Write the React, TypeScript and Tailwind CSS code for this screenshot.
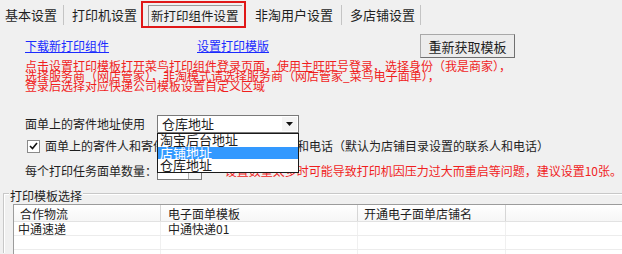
const font = { fontFamily: '"Noto Sans CJK SC", "Noto Sans", sans-serif' }

function Tabs() {
  return (
    <div className="flex h-[30px] items-center whitespace-nowrap text-[13px] text-[#1e1e1e]">
      <span className="ml-[5px]">基本设置</span>
      <div className="ml-[6px] h-[20px] w-px bg-[#c4c4c4]" />
      <span className="ml-[8px]">打印机设置</span>
      <div className="ml-[4px] mt-[1px] flex h-[27px] w-[105px] items-end self-start border-2 border-[#e01818] pl-[5px]">
        <div className="flex h-[21px] w-[94px] items-center border-l border-t border-[#9a9a9a] pl-[2px] text-[12.5px]">
          新打印组件设置
        </div>
      </div>
      <span className="ml-[9px]">非淘用户设置</span>
      <div className="ml-[8px] h-[20px] w-px bg-[#c4c4c4]" />
      <span className="ml-[8px]">多店铺设置</span>
      <div className="ml-[5px] h-[20px] w-px bg-[#c4c4c4]" />
    </div>
  )
}

function Arrow() {
  return (
    <svg width="7" height="4" viewBox="0 0 7 4">
      <path d="M0 0h7L3.5 4z" fill="#111" />
    </svg>
  )
}

export default function App() {
  return (
    <div
      className="relative h-[254px] w-[622px] overflow-hidden bg-[#f0f0f0] text-[12px] text-[#1e1e1e]"
      style={font}
    >
      <Tabs />

      <div className="pl-[25px]">
        {/* links + button */}
        <div className="mt-[4px] flex h-[24px] items-center">
          <span className="w-[172px] text-[#1a2bff] underline">下载新打印组件</span>
          <span className="w-[223px] text-[#1a2bff] underline">设置打印模版</span>
          <button className="h-[24px] w-[95px] border border-[#a8a8a8] border-b-[#707070] border-r-[#707070] bg-[#ececec] text-[13px] leading-none">
            重新获取模板
          </button>
        </div>

        {/* notice */}
        <div className="mt-[3px] text-[12px] leading-[10px] text-[#f01e1e]">
          <div>点击设置打印模板打开菜鸟打印组件登录页面，使用主旺旺号登录，选择身份（我是商家），</div>
          <div>选择服务商（网店管家），非淘模式请选择服务商（网店管家_菜鸟电子面单），</div>
          <div>登录后选择对应快递公司模板设置自定义区域</div>
        </div>

        {/* address source */}
        <div className="mt-[24px] flex h-[18px] items-center">
          <span className="w-[132px]">面单上的寄件地址使用</span>
          <div className="flex h-[18px] w-[142px] items-center justify-between border border-[#7a7a7a] bg-white pl-[4px] pr-[1px] text-[13px]">
            <span>仓库地址</span>
            <div className="flex h-[14px] w-[15px] items-center justify-center bg-[#f4f4f4]">
              <Arrow />
            </div>
          </div>
        </div>

        {/* checkbox */}
        <div className="mt-[6px] flex h-[14px] items-center whitespace-nowrap">
          <div className="ml-[2px] flex h-[13px] w-[13px] items-center justify-center border border-[#8a8a8a] bg-white">
            <svg width="9" height="8" viewBox="0 0 9 8">
              <path d="M1 4l2.5 2.5L8 1" stroke="#111" strokeWidth="1.6" fill="none" />
            </svg>
          </div>
          <span className="ml-[5px]">
            面单上的寄件人和寄件人电话使用店铺的联系人和电话（默认为店铺目录设置的联系人和电话）
          </span>
        </div>

        {/* count */}
        <div className="mt-[9px] flex h-[18px] items-center whitespace-nowrap">
          <span className="w-[135px]">每个打印任务面单数量：</span>
          <div className="flex h-[18px] w-[54px] items-center justify-end border border-[#7a7a7a] bg-white">
            <div className="flex h-full w-[13px] items-center justify-center border-l border-[#b0b0b0] bg-[#f4f4f4]">
              <Arrow />
            </div>
          </div>
          <span className="ml-[23px] text-[#f01e1e]">
            设置数量太多时可能导致打印机因压力过大而重启等问题，建议设置10张。
          </span>
        </div>
      </div>

      {/* group box */}
      <div className="relative ml-[3px] mt-[7px]">
        <div className="absolute left-0 right-0 top-[6px] h-[60px] border-l border-t border-[#c8c8c8] shadow-[inset_1px_1px_0_#ffffff]" />
        <span className="relative ml-[6px] bg-[#f0f0f0] px-[1px] leading-[13px]">打印模板选择</span>
        <div className="relative ml-[10px] mt-[-1px] border-l border-t border-[#9c9c9c] bg-white">
          <div className="flex h-[17px] border-b border-[#e2e2e2] bg-gradient-to-b from-white to-[#f6f6f6] text-[12px] leading-[17px]">
            <div className="w-[147px] border-r border-[#d6d6d6] pl-[6px]">合作物流</div>
            <div className="w-[197px] border-r border-[#d6d6d6] pl-[7px]">电子面单模板</div>
            <div className="w-[148px] border-r border-[#d6d6d6] pl-[6px]">开通电子面单店铺名</div>
            <div className="flex-1" />
          </div>
          {[['中通速递', '中通快递01'], ['', ''], ['', '']].map((r, i) => (
            <div key={i} className="flex h-[14px] border-b border-[#ececec] text-[12px] leading-[14px]">
              <div className="w-[147px] border-r border-[#f0f0f0] pl-[4px]">{r[0]}</div>
              <div className="w-[197px] border-r border-[#f0f0f0] pl-[7px]">{r[1]}</div>
              <div className="w-[148px] border-r border-[#f0f0f0]" />
              <div className="flex-1" />
            </div>
          ))}
        </div>
      </div>

      {/* open dropdown list */}
      <div className="absolute left-[157px] top-[133px] w-[142px] border border-[#1a1a1a] bg-white text-[13px] leading-[12.5px]">
        <div className="pl-[2px]">淘宝后台地址</div>
        <div className="bg-[#3399ff] pl-[2px] text-white">店铺地址</div>
        <div className="pl-[2px]">仓库地址</div>
      </div>
    </div>
  )
}
